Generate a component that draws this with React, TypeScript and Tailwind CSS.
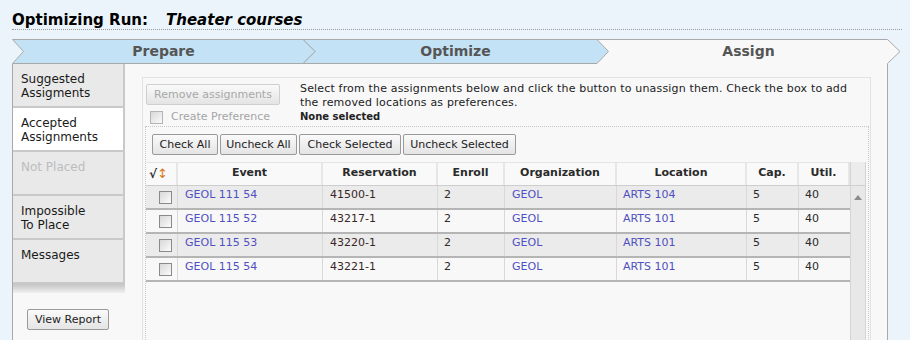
import React from "react";

const rows = [
  { event: "GEOL 111 54", res: "41500-1", enroll: "2", org: "GEOL", loc: "ARTS 104", cap: "5", util: "40" },
  { event: "GEOL 115 52", res: "43217-1", enroll: "2", org: "GEOL", loc: "ARTS 101", cap: "5", util: "40" },
  { event: "GEOL 115 53", res: "43220-1", enroll: "2", org: "GEOL", loc: "ARTS 101", cap: "5", util: "40" },
  { event: "GEOL 115 54", res: "43221-1", enroll: "2", org: "GEOL", loc: "ARTS 101", cap: "5", util: "40" },
];

const cols = "grid grid-cols-[32px_145px_115px_67px_112px_130px_52px_51px]";

const Checkbox = ({ disabled = false }: { disabled?: boolean }) => (
  <div
    className={`w-[13px] h-[13px] border ${
      disabled ? "border-[#b4b4b4]" : "border-[#8a8a8a]"
    } bg-gradient-to-br from-[#d8d8d8] to-[#fbfbfb]`}
  />
);

const Btn = ({ label, disabled = false, w }: { label: string; disabled?: boolean; w: string }) => (
  <button
    className={`${w} h-[21px] rounded-[2px] border text-[11px] leading-none bg-gradient-to-b from-[#fafafa] to-[#e4e4e4] ${
      disabled ? "border-[#cfcfcf] text-[#a8a8a8]" : "border-[#9a9a9a] text-[#222]"
    }`}
  >
    {label}
  </button>
);

const SideTab = ({
  lines,
  active = false,
  disabled = false,
}: {
  lines: string[];
  active?: boolean;
  disabled?: boolean;
}) => (
  <div
    className={`h-[44px] pl-[8px] pt-[8px] border-b-2 border-r-2 border-[#c9c9c9] text-[12px] leading-[14px] ${
      active ? "bg-white" : "bg-[#e9e9e9]"
    } ${disabled ? "text-[#bdbdbd]" : "text-[#1a1a1a]"}`}
  >
    {lines.map((l) => (
      <div key={l}>{l}</div>
    ))}
  </div>
);

export default function App() {
  return (
    <div className="w-[910px] h-[340px] overflow-hidden bg-[#ecf4fb] font-['DejaVu_Sans',sans-serif]">
      {/* Title */}
      <div className="ml-[12px] w-[890px] h-[30px] pt-[9px] border-b border-dotted border-[#9a9a9a] flex items-baseline text-[15px] font-bold text-black">
        <span>Optimizing Run:</span>
        <span className="ml-[18px] italic">Theater courses</span>
      </div>

      {/* Wizard steps */}
      <div className="relative ml-[12px] mt-[9px] w-[890px] h-[25px]">
        <svg className="absolute inset-0" width="890" height="25" viewBox="0 0 890 25">
          <polygon points="585,0.5 875.5,0.5 888,12.5 875.5,25 585,25" fill="#f8f8f8" />
          <polyline points="585,0.5 875.5,0.5 888,12.5 875.5,24.5 875.5,25" fill="none" stroke="#a9a9a9" />
          <polygon points="291,0.5 585,0.5 596.5,12.5 585,24.5 291,24.5 303,12.5" fill="#c4e2f5" stroke="#a9a9a9" />
          <polygon points="0.5,0.5 291,0.5 303,12.5 291,24.5 0.5,24.5 11.5,12.5" fill="#c4e2f5" stroke="#a9a9a9" />
        </svg>
        <div className="relative flex h-full items-center text-[14px] font-bold text-[#555]">
          <div className="w-[303px] text-center">Prepare</div>
          <div className="ml-[-12px] w-[305px] text-center">Optimize</div>
          <div className="ml-[-11px] w-[303px] text-center">Assign</div>
        </div>
      </div>

      {/* Panel */}
      <div className="ml-[12px] w-[876px] h-[276px] border-x border-[#a9a9a9] bg-[#f8f8f8] flex">
        {/* Sidebar */}
        <div className="w-[112px] shrink-0">
          <SideTab lines={["Suggested", "Assigments"]} />
          <SideTab lines={["Accepted", "Assignments"]} active />
          <SideTab lines={["Not Placed"]} disabled />
          <SideTab lines={["Impossible", "To Place"]} />
          <SideTab lines={["Messages"]} />
          <div className="h-[9px] bg-gradient-to-b from-[#c4c4c4] to-[#f0f0f0]" />
          <div className="ml-[14px] mt-[13px]">
            <Btn label="View Report" w="w-[82px]" />
          </div>
        </div>

        {/* Content */}
        <div className="ml-[17px] mt-[13px] w-[729px] border-l border-t border-r border-[#e2e2e2] flex flex-col">
          <div className="h-[48px] pt-[3px] pl-[3px] flex">
            <div className="w-[154px] shrink-0">
              <Btn label="Remove assignments" disabled w="w-[134px]" />
              <div className="mt-[4px] ml-[4px] flex items-center gap-[8px]">
                <Checkbox disabled />
                <span className="text-[11px] text-[#a5a5a5]">Create Preference</span>
              </div>
            </div>
            <div className="pt-[1px] text-[11px] leading-[14px] tracking-[0.17px] text-[#222]">
              <div>
                Select from the assignments below and click the button to unassign them. Check the box to add
              </div>
              <div>the removed locations as preferences.</div>
              <div className="text-[10px] leading-[13px] tracking-normal font-bold">None selected</div>
            </div>
          </div>

          {/* Grid area */}
          <div className="ml-[2px] mr-[1px] flex-1 border-l border-t border-r border-dotted border-[#c8c8c8]">
            <div className="pl-[6px] pt-[7px] flex gap-[2px]">
              <Btn label="Check All" w="w-[66px]" />
              <Btn label="Uncheck All" w="w-[77px]" />
              <Btn label="Check Selected" w="w-[102px]" />
              <Btn label="Uncheck Selected" w="w-[113px]" />
            </div>

            <div className="mt-[7px] flex">
              <div className="w-[704px]">
                <div className={`${cols} h-[24px] border-t border-b border-t-[#e4e4e4] border-b-[#cdcdcd] bg-[#f9f9f9] text-[11px] font-bold text-[#2a2a2a]`}>
                  <div className="flex items-center pl-[3px] border-r-2 border-[#e6e6e6]">
                    <span className="text-[12px]">√</span>
                    <span className="text-[#d77a1c] font-normal text-[13px]">↕</span>
                  </div>
                  {["Event", "Reservation", "Enroll", "Organization", "Location", "Cap.", "Util."].map((h) => (
                    <div key={h} className="flex items-center justify-center border-r-2 border-[#e6e6e6]">
                      {h}
                    </div>
                  ))}
                </div>
                {rows.map((r, i) => (
                  <div
                    key={r.event}
                    className={`${cols} h-[24px] border-b-2 border-[#b5b5b5] text-[11px] leading-[13px] ${
                      i % 2 === 0 ? "bg-[#ebebeb]" : "bg-[#f8f8f8]"
                    }`}
                  >
                    <div className="pl-[13px] pt-[5px] border-r border-[#d8d8d8]">
                      <Checkbox />
                    </div>
                    <div className="pl-[7px] pt-[2px] border-r border-[#d8d8d8] text-[#5050c2]">{r.event}</div>
                    <div className="pl-[7px] pt-[2px] border-r border-[#d8d8d8] text-[#3a2626]">{r.res}</div>
                    <div className="pl-[6px] pt-[2px] border-r border-[#d8d8d8] text-[#2a2a2a]">{r.enroll}</div>
                    <div className="pl-[7px] pt-[2px] border-r border-[#d8d8d8] text-[#5050c2]">{r.org}</div>
                    <div className="pl-[6px] pt-[2px] border-r border-[#d8d8d8] text-[#5050c2]">{r.loc}</div>
                    <div className="pl-[6px] pt-[2px] border-r border-[#d8d8d8] text-[#2a2a2a]">{r.cap}</div>
                    <div className="pl-[6px] pt-[2px] text-[#2a2a2a]">{r.util}</div>
                  </div>
                ))}
              </div>
              {/* Scrollbar */}
              <div className="w-[16px] h-[180px] border-l border-r border-[#d4d4d4] bg-[#e8e8e8]">
                <div className="h-[24px] border-b border-[#d0d0d0] bg-[#ececec]" />
                <div className="flex justify-center pt-[9px]">
                  <svg width="8" height="5" viewBox="0 0 8 5">
                    <polygon points="4,0 8,5 0,5" fill="#8c8c8c" />
                  </svg>
                </div>
              </div>
            </div>
          </div>
        </div>
      </div>
    </div>
  );
}
